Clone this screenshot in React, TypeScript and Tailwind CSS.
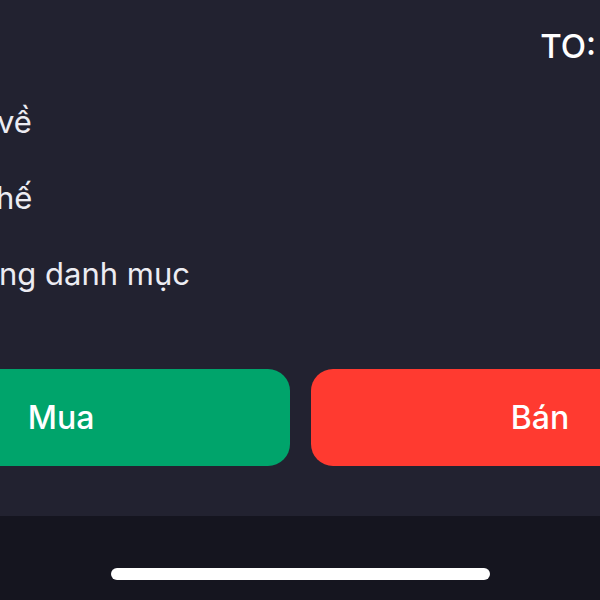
import React from "react";

export default function App() {
  return (
    <div
      className="w-[600px] h-[600px] overflow-hidden bg-[#222230] flex flex-col text-white"
      style={{ fontFamily: "Inter, 'Noto Sans', sans-serif" }}
    >
      <div className="flex justify-end pt-[30px] pr-[4px]">
        <span className="text-[33px] leading-[33px] font-medium text-white">TO:</span>
      </div>

      <div className="mt-[21px] flex flex-col text-[31px] leading-[76px] text-[#ececf2] whitespace-nowrap">
        <div className="ml-[-3px]">về</div>
        <div className="ml-[-4px]">hế</div>
        <div className="ml-[-1px]">ng danh mục</div>
      </div>

      <div className="mt-[57px] flex gap-[21px] ml-[-168px] h-[97px] shrink-0">
        <div className="w-[458px] shrink-0 h-full rounded-[22px] bg-[#00a46b] flex items-center justify-center">
          <span className="text-[32px] font-medium leading-none text-white">Mua</span>
        </div>
        <div className="w-[458px] shrink-0 h-full rounded-[22px] bg-[#ff3a30] flex items-center justify-center">
          <span className="text-[32px] font-medium leading-none text-white">Bán</span>
        </div>
      </div>

      <div className="mt-[50px] flex-1 bg-[#15151f] flex justify-center pt-[52px]">
        <div className="w-[379px] h-[12px] rounded-full bg-white" />
      </div>
    </div>
  );
}
